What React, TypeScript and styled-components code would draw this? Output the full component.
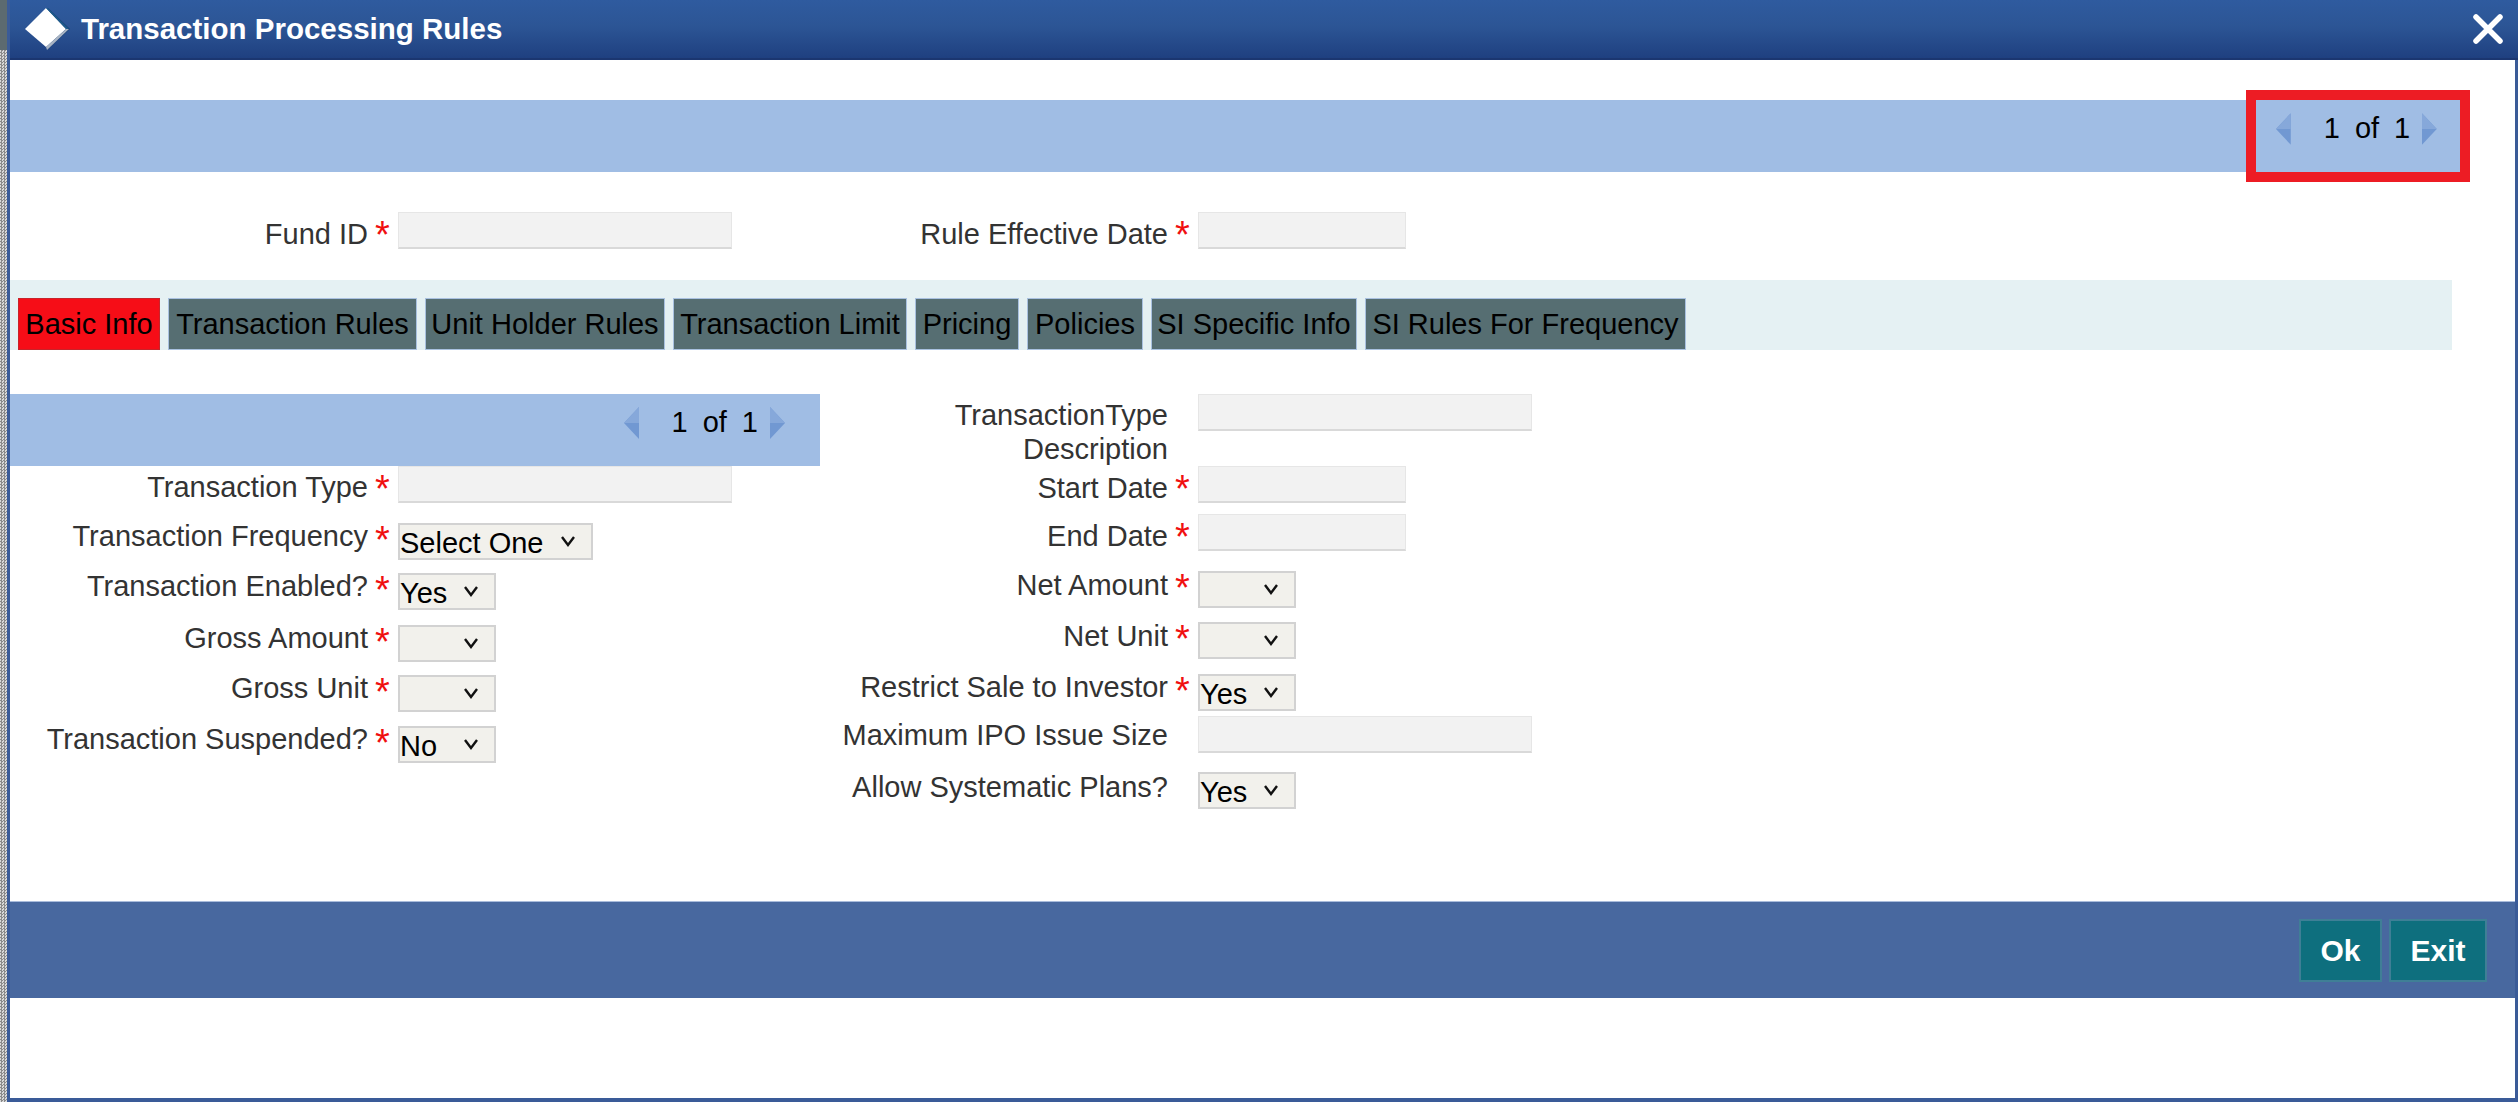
import React from 'react';
import styled, { createGlobalStyle } from 'styled-components';

const GlobalStyle = createGlobalStyle`
    html, body {
        margin: 0;
        padding: 0;
        background: #ffffff;
        overflow: hidden;
    }
`;

const Page = styled.div`
    display: flex;
    width: 2518px;
    height: 1102px;
    font-family: "Liberation Sans", Arial, sans-serif;
    font-size: 29px;
    color: #333333;
`;

const EdgeStrip = styled.div`
    width: 7px;
    flex-shrink: 0;
    background: repeating-conic-gradient(#8a8a8a 0 25%, #d8d8d8 0 50%) 0 0 / 3px 3px;
    border-top: 50px solid #5c6a70;
`;

const Dialog = styled.div`
    flex: 1;
    display: flex;
    flex-direction: column;
    min-width: 0;
    border-left: 3px solid #3a5b98;
`;

const TitleBar = styled.header`
    height: 60px;
    flex-shrink: 0;
    display: flex;
    align-items: center;
    padding: 0 15px 0 15px;
    background: linear-gradient(#2f5b9f, #2c5595 45%, #1f4080);
    border-bottom: 2px solid #1b3670;
    box-sizing: border-box;
`;

const Title = styled.h1`
    flex: 1;
    margin: 0 0 0 10px;
    font-size: 29.5px;
    font-weight: bold;
    color: #ffffff;
`;

const Body = styled.main`
    flex: 1;
    display: flex;
    flex-direction: column;
    padding-top: 40px;
    background: #ffffff;
    border-right: 3px solid #3a5b98;
    border-bottom: 4px solid #3a5b98;
    min-height: 0;
`;

const Band = styled.div<{ $width: string }>`
    display: flex;
    justify-content: flex-end;
    width: ${(p) => p.$width};
    height: 72px;
    flex-shrink: 0;
    background: #a0bde4;
`;

const Pager = styled.div<{ $marked?: boolean }>`
    display: flex;
    align-items: flex-start;
    box-sizing: border-box;
    height: 72px;
    padding: ${(p) => (p.$marked ? '13px 23px 0 20px' : '13px 35px 0 0')};
    color: #000000;
    ${(p) => p.$marked && 'outline: 10px solid #ed1c24; width: 204px;'}
`;

const PagerText = styled.span`
    display: flex;
    gap: 15px;
    margin: -1px 11px 0 32px;
    line-height: 32px;
`;

const FundRow = styled.section`
    display: grid;
    grid-template-columns: 810px 1fr;
    margin-top: 40px;
`;

const TabStrip = styled.nav`
    display: flex;
    align-items: flex-end;
    gap: 8px;
    width: 2442px;
    height: 70px;
    margin-top: 31px;
    padding-left: 8px;
    box-sizing: border-box;
    background: #e5f1f3;
`;

const Tab = styled.button<{ $active?: boolean; $width: number }>`
    width: ${(p) => p.$width}px;
    height: 52px;
    padding: 0;
    border: 1px solid ${(p) => (p.$active ? '#c8242a' : '#a9c1e0')};
    background: ${(p) => (p.$active ? '#f60d17' : '#566e72')};
    color: #000000;
    font: inherit;
    white-space: nowrap;
`;

const FormGrid = styled.section`
    display: grid;
    grid-template-columns: 810px 1fr;
    margin-top: 44px;
`;

const Column = styled.div`
    display: flex;
    flex-direction: column;
`;

const Field = styled.div<{ $top?: number; $height?: number }>`
    display: flex;
    align-items: flex-start;
    height: ${(p) => p.$height ?? 37}px;
    margin-top: ${(p) => p.$top ?? 0}px;
`;

const Label = styled.label<{ $width: number; $nudge?: number }>`
    width: ${(p) => p.$width}px;
    flex-shrink: 0;
    text-align: right;
    line-height: 33px;
    margin-top: ${(p) => p.$nudge ?? 4}px;
`;

const WrappedLabel = styled(Label)`
    box-sizing: border-box;
    padding-left: 100px;
    line-height: 34px;
`;

const Star = styled.span<{ $nudge?: number }>`
    width: 30px;
    height: 37px;
    flex-shrink: 0;
    margin-top: ${(p) => (p.$nudge ?? 6) < 0 ? -6 : 0}px;
    padding-left: 7px;
    box-sizing: border-box;
    color: #f01010;
    font-size: 38px;
    line-height: 46px;
`;

const TextBox = styled.input<{ $width: number }>`
    width: ${(p) => p.$width}px;
    height: 37px;
    box-sizing: border-box;
    padding: 0;
    background: #f2f2f2;
    border: 1px solid #e6e6e6;
    border-bottom: 2px solid #d9d9d9;
`;

const SelectWrap = styled.div`
    position: relative;
    display: flex;
`;

const Dropdown = styled.select<{ $width: number }>`
    appearance: none;
    width: ${(p) => p.$width}px;
    height: 37px;
    box-sizing: border-box;
    padding: 2px 0 0 0;
    background: #f2f1ec;
    border: 2px solid #d2d2d2;
    border-radius: 0;
    color: #000000;
    font-family: inherit;
    font-size: 29px;
`;

const ChevronMark = styled.svg`
    position: absolute;
    top: 12px;
    right: 17px;
    pointer-events: none;
`;

const Footer = styled.footer`
    display: flex;
    justify-content: flex-end;
    align-items: flex-start;
    gap: 7px;
    height: 97px;
    margin-top: auto;
    margin-bottom: 100px;
    padding: 17px 28px 0 0;
    box-sizing: border-box;
    background: #48689f;
    border-top: 1px solid #a9bcdc;
`;

const ActionButton = styled.button<{ $width: number }>`
    width: ${(p) => p.$width}px;
    height: 63px;
    padding: 0;
    background: #0e6f7e;
    border: 2px solid #3f7f96;
    color: #ffffff;
    font-family: inherit;
    font-size: 30px;
    font-weight: bold;
`;

const CloseIcon = () => (
    <svg width="30" height="30" viewBox="0 0 30 30">
        <path d="M3 3 L27 27 M27 3 L3 27" stroke="#ffffff" strokeWidth="5.5" strokeLinecap="round" />
    </svg>
);

const DiamondIcon = () => (
    <svg width="46" height="42" viewBox="0 0 46 42">
        <path d="M23 0 L45 21 L22 42 L25 30 Z" fill="#173f73" />
        <path d="M0 21 L21 0 L41 21 L21 39 Z" fill="#ffffff" />
        <path d="M21 0 L41 21 L44 21 L23 0 Z" fill="#1d5a8c" />
        <path d="M21 39 L41 21 L44 21 L22 42 Z" fill="#a9b4c4" />
    </svg>
);

const Arrow = ({ flip }: { flip?: boolean }) => (
    <svg width="16" height="32" viewBox="0 0 16 32">
        <g transform={flip ? 'matrix(-1 0 0 1 16 0)' : undefined}>
            <path d="M15 0 L0 16 L15 32 Z" fill="#7198d2" />
            <path d="M15 0 L0 16 L15 16 Z" fill="#86a8da" />
        </g>
    </svg>
);

const PagerControl = ({ marked }: { marked?: boolean }) => (
    <Pager $marked={marked}>
        <Arrow />
        <PagerText>
            <span>1</span>
            <span>of</span>
            <span>1</span>
        </PagerText>
        <Arrow flip />
    </Pager>
);

type FieldDef = {
    label: string;
    kind?: string;
    value?: string;
    width: number;
    top: number;
    nudge: number;
    optional?: boolean;
};

const leftFields: FieldDef[] = [
    { label: 'Transaction Type', kind: 'text', width: 334, top: 0, nudge: 5 },
    { label: 'Transaction Frequency', value: 'Select One', width: 195, top: 20, nudge: -3 },
    { label: 'Transaction Enabled?', value: 'Yes', width: 98, top: 13, nudge: -3 },
    { label: 'Gross Amount', value: '', width: 98, top: 15, nudge: -3 },
    { label: 'Gross Unit', value: '', width: 98, top: 13, nudge: -3 },
    { label: 'Transaction Suspended?', value: 'No', width: 98, top: 14, nudge: -3 },
];

const rightFields: FieldDef[] = [
    { label: 'Start Date', kind: 'text', width: 208, top: 0, nudge: 6 },
    { label: 'End Date', kind: 'text', width: 208, top: 11, nudge: 6 },
    { label: 'Net Amount', value: '', width: 98, top: 20, nudge: -2 },
    { label: 'Net Unit', value: '', width: 98, top: 14, nudge: -2 },
    { label: 'Restrict Sale to Investor', value: 'Yes', width: 98, top: 15, nudge: -3 },
    { label: 'Maximum IPO Issue Size', kind: 'text', width: 334, top: 5, nudge: 3, optional: true },
    { label: 'Allow Systematic Plans?', value: 'Yes', width: 98, top: 19, nudge: -1, optional: true },
];

const tabs = [
    { name: 'Basic Info', width: 142, active: true },
    { name: 'Transaction Rules', width: 249 },
    { name: 'Unit Holder Rules', width: 240 },
    { name: 'Transaction Limit', width: 234 },
    { name: 'Pricing', width: 104 },
    { name: 'Policies', width: 116 },
    { name: 'SI Specific Info', width: 206 },
    { name: 'SI Rules For Frequency', width: 321 },
];

const FormField = ({ def, labelWidth }: { def: FieldDef; labelWidth: number }) => (
    <Field $top={def.top}>
        <Label $width={labelWidth} $nudge={def.nudge}>{def.label}</Label>
        <Star $nudge={def.nudge}>{def.optional ? '' : '*'}</Star>
        {def.kind === 'text' ? (
            <TextBox $width={def.width} readOnly />
        ) : (
            <SelectWrap>
                <Dropdown $width={def.width} defaultValue={def.value}>
                    <option value={def.value}>{def.value}</option>
                </Dropdown>
                <ChevronMark width="16" height="12" viewBox="0 0 16 12">
                    <path d="M2 2 L8 10 L14 2" fill="none" stroke="#111111" strokeWidth="2.4" />
                </ChevronMark>
            </SelectWrap>
        )}
    </Field>
);

const App: React.FC = () => {
    return (
        <Page>
            <GlobalStyle />
            <EdgeStrip />
            <Dialog>
                <TitleBar>
                    <DiamondIcon />
                    <Title>Transaction Processing Rules</Title>
                    <CloseIcon />
                </TitleBar>
                <Body>
                    <Band $width="2450px">
                        <PagerControl marked />
                    </Band>

                    <FundRow>
                        <FormField def={{ label: 'Fund ID', kind: 'text', width: 334, top: 0, nudge: 6 }} labelWidth={358} />
                        <FormField def={{ label: 'Rule Effective Date', kind: 'text', width: 208, top: 0, nudge: 6 }} labelWidth={348} />
                    </FundRow>

                    <TabStrip>
                        {tabs.map((tab) => (
                            <Tab key={tab.name} $active={tab.active} $width={tab.width}>
                                {tab.name}
                            </Tab>
                        ))}
                    </TabStrip>

                    <FormGrid>
                        <Column>
                            <Band $width="810px">
                                <PagerControl />
                            </Band>
                            {leftFields.map((def) => (
                                <FormField key={def.label} def={def} labelWidth={358} />
                            ))}
                        </Column>
                        <Column>
                            <Field $height={72}>
                                <WrappedLabel $width={348} $nudge={4}>TransactionType Description</WrappedLabel>
                                <Star />
                                <TextBox $width={334} readOnly />
                            </Field>
                            {rightFields.map((def) => (
                                <FormField key={def.label} def={def} labelWidth={348} />
                            ))}
                        </Column>
                    </FormGrid>

                    <Footer>
                        <ActionButton $width={83}>Ok</ActionButton>
                        <ActionButton $width={98}>Exit</ActionButton>
                    </Footer>
                </Body>
            </Dialog>
        </Page>
    );
};

export default App;
